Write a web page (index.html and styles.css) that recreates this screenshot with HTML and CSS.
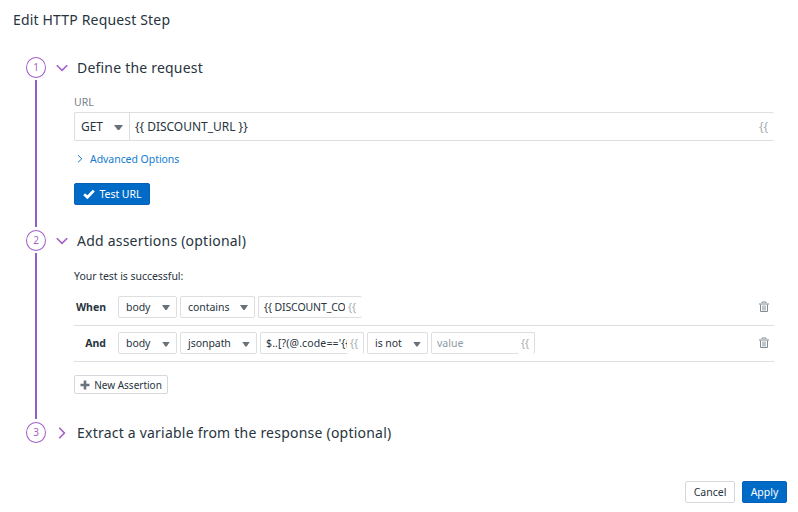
FILE: index.html
```html
<!DOCTYPE html>
<html lang="en">
<head>
<meta charset="utf-8">
<title>Edit HTTP Request Step</title>
<link rel="stylesheet" href="styles.css">
</head>
<body>
<main class="dialog">
  <h1 class="title">Edit HTTP Request Step</h1>

  <section class="step step-define">
    <div class="rail"><span class="num">1</span><span class="line"></span></div>
    <div class="content">
      <header class="head"><svg class="chev" viewBox="0 0 12 12"><path d="M.8 3.2 6 8.4l5.2-5.2"/></svg><h2>Define the request</h2></header>
      <div class="body">
        <label class="label">URL</label>
        <div class="url">
          <div class="method"><span>GET</span><i class="caret"></i></div>
          <span class="url-value">{{ DISCOUNT_URL }}</span>
          <span class="braces">{{</span>
        </div>
        <a class="advanced"><svg viewBox="0 0 8 10"><path d="m2 1.3 3.8 3.5L2 8.3"/></svg><span>Advanced Options</span></a>
        <button class="btn primary test"><svg viewBox="0 0 12 10"><path d="m1.2 5.3 3.2 3L10.8 1.6"/></svg><span>Test URL</span></button>
      </div>
    </div>
  </section>

  <section class="step step-assert">
    <div class="rail"><span class="num">2</span><span class="line"></span></div>
    <div class="content">
      <header class="head"><svg class="chev" viewBox="0 0 12 12"><path d="M.8 3.2 6 8.4l5.2-5.2"/></svg><h2 class="wide">Add assertions (optional)</h2></header>
      <div class="body">
        <p class="note">Your test is successful:</p>
        <div class="rule">
          <b>When</b>
          <div class="select w-body"><span>body</span><i class="caret"></i></div>
          <div class="select w-contains"><span>contains</span><i class="caret"></i></div>
          <div class="field open"><span class="value tight">{{ DISCOUNT_CO</span><span class="braces">{{</span></div>
          <svg class="trash" viewBox="0 0 10 12"><path d="M0 3h10M3 2V1h4v1M1.5 3.5v7h7v-7M4 4.5v5M6 4.5v5"/></svg>
        </div>
        <div class="rule">
          <b>And</b>
          <div class="select w-body"><span>body</span><i class="caret"></i></div>
          <div class="select w-json"><span>jsonpath</span><i class="caret"></i></div>
          <div class="field notch"><span class="value loose">$..[?(@.code=='{{</span><span class="braces">{{</span></div>
          <div class="select w-is"><span>is not</span><i class="caret"></i></div>
          <div class="field notch"><span class="value placeholder">value</span><span class="braces">{{</span></div>
          <svg class="trash" viewBox="0 0 10 12"><path d="M0 3h10M3 2V1h4v1M1.5 3.5v7h7v-7M4 4.5v5M6 4.5v5"/></svg>
        </div>
        <button class="btn add"><svg viewBox="0 0 10 10"><path d="M5 .5v9M.5 5h9"/></svg><span>New Assertion</span></button>
      </div>
    </div>
  </section>

  <section class="step">
    <div class="rail"><span class="num">3</span></div>
    <div class="content">
      <header class="head"><svg class="chev" viewBox="0 0 12 12"><path d="M3.2.8 8.4 6l-5.2 5.2"/></svg><h2 class="wide">Extract a variable from the response (optional)</h2></header>
    </div>
  </section>

  <footer class="footer">
    <button class="btn cancel">Cancel</button>
    <button class="btn primary apply">Apply</button>
  </footer>
</main>
</body>
</html>
```
FILE: styles.css
```css
* { box-sizing: border-box; }
body { margin: 0; background: #fff; color: #28343e; font: 10.5px/14px "Noto Sans", sans-serif; }
h1, h2, p { margin: 0; font-weight: 400; }
svg { flex: none; fill: none; stroke: currentColor; }
.dialog { display: flex; flex-direction: column; width: 798px; height: 512px; overflow: hidden; }
.title { height: 57px; padding: 10px 0 0 13px; font-size: 14px; line-height: 20px; letter-spacing: .17px; }

.step { display: flex; padding-left: 26px; }
.step-define { height: 173px; }
.step-assert { height: 192px; }
.rail { display: flex; flex-direction: column; align-items: center; width: 20px; color: #a35fc8; }
.num { width: 20px; height: 21px; border: 1px solid #a35fc8; border-radius: 50%; font-size: 10px; line-height: 19px; text-align: center; }
.line { flex: 1; width: 2px; margin: 2px 0 3px; background: #9060c0; }
.content { width: 728px; padding-left: 9.5px; }
.head { display: flex; align-items: center; height: 21px; }
.head h2 { margin-left: 9.5px; font-size: 14px; line-height: 20px; letter-spacing: .2px; white-space: nowrap; }
.head .wide { letter-spacing: .22px; }
.chev { width: 12px; height: 12px; color: #a35fc8; stroke-width: 1.6; }
.body { display: flex; flex-direction: column; align-items: flex-start; padding-left: 18.5px; }

.label { margin-top: 17px; height: 17px; color: #76818a; }
.url { display: flex; align-items: center; width: 700px; height: 29px; border: 1px solid #dcdee0; border-right: 0; border-radius: 2px; font-size: 12px; letter-spacing: -.02px; }
.method { display: flex; align-items: center; justify-content: space-between; width: 55px; height: 27px; padding: 0 6px; border-right: 1px solid #dcdee0; }
.url-value { flex: 1; padding-left: 5px; }
.url .braces { margin-right: 6px; }
.braces { color: #a5acb1; }
.caret { width: 9px; height: 5px; margin-top: 2px; background: #66717a; clip-path: polygon(0 0, 100% 0, 58% 100%, 42% 100%); }
.advanced { display: flex; align-items: center; height: 14px; margin-top: 11px; padding-left: 2px; color: #147bd1; letter-spacing: -.05px; }
.advanced svg { width: 8px; height: 10px; margin-right: 6px; }

.btn { display: flex; align-items: center; justify-content: center; padding: 0; border: 1px solid #d5d8dc; border-radius: 2px; background: #fff; color: inherit; font: inherit; white-space: nowrap; }
.primary { border-color: #0560ba; background: #006bc6; color: #fff; }
.test { width: 76px; height: 22px; margin-top: 17px; gap: 5px; letter-spacing: -.05px; }
.test svg { width: 12px; height: 10px; stroke-width: 2.8; }

.note { margin-top: 18px; height: 20px; letter-spacing: -.04px; }
.rule { display: flex; align-items: center; gap: 3px; width: 700px; height: 36px; padding-bottom: 1px; border-bottom: 1px solid #dcdee0; }
.note + .rule { height: 37px; }
.rule b { width: 32px; margin-right: 9px; text-align: right; }
.select { display: flex; align-items: center; justify-content: space-between; height: 22px; padding: 0 6px 0 7px; border: 1px solid #dcdee0; border-radius: 2px; letter-spacing: -.05px; }
.select .caret { width: 8px; }
.w-body { width: 59px; }
.w-contains { width: 75px; }
.w-json { width: 77px; }
.w-is { width: 61px; }
.field { display: flex; align-items: center; width: 104px; height: 22px; padding-left: 5px; border: 1px solid #dcdee0; border-radius: 2px; }
.open { border-right: 0; }
.notch { padding-bottom: 1px; border-bottom: 0; background: linear-gradient(#dcdee0, #dcdee0) 0 100% / 86px 1px no-repeat; }
.value { width: 81px; margin-right: 3px; overflow: hidden; white-space: nowrap; }
.tight { letter-spacing: -.1px; }
.loose { letter-spacing: .13px; }
.placeholder { color: #929ba2; }
.trash { width: 10px; height: 12px; margin-left: auto; margin-right: 5px; color: #7f8a92; }
.add { width: 94px; height: 19px; margin-top: 13px; gap: 4px; font-size: 10px; }
.add svg { width: 10px; height: 10px; color: #68737b; stroke-width: 2.6; }

.footer { display: flex; justify-content: flex-end; gap: 7px; margin-top: auto; padding: 0 11px 9px 0; }
.cancel { width: 50px; height: 22px; }
.apply { width: 45px; height: 22px; }
```
